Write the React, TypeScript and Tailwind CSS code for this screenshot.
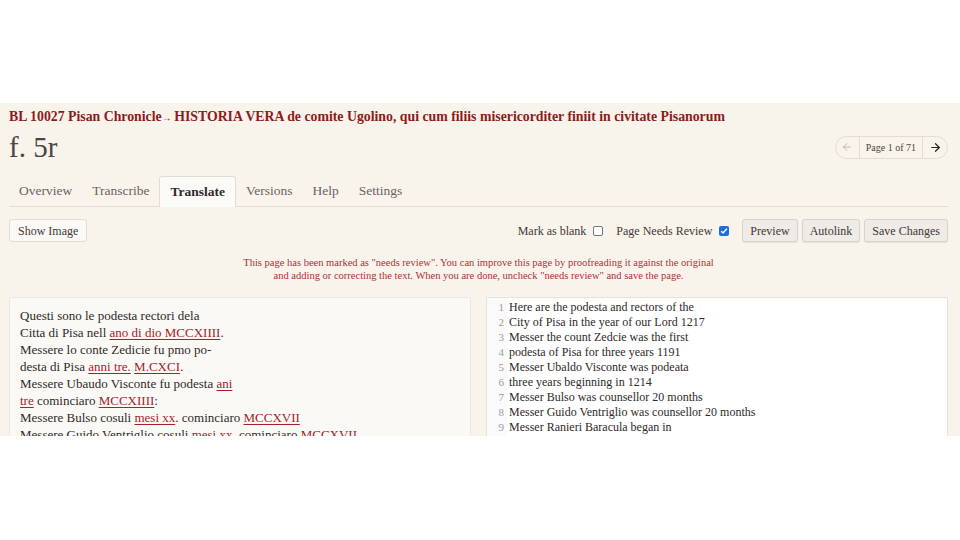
import { ArrowLeft, ArrowRight } from "lucide-react";

const serif = "font-['Liberation_Serif','DejaVu_Serif',serif]";

function L({ children }: { children: React.ReactNode }) {
  return <span className="text-[#a3232b] underline underline-offset-2 decoration-1">{children}</span>;
}

const translation = [
  "Here are the podesta and rectors of the",
  "City of Pisa in the year of our Lord 1217",
  "Messer the count Zedcie was the first",
  "podesta of Pisa for three years 1191",
  "Messer Ubaldo Visconte was podeata",
  "three years beginning in 1214",
  "Messer Bulso was counsellor 20 months",
  "Messer Guido Ventriglio was counsellor 20 months",
  "Messer Ranieri Baracula began in",
  "1217",
];

const tabs = ["Overview", "Transcribe", "Translate", "Versions", "Help", "Settings"];

const btn =
  "h-[23px] px-[7px] border border-[#d8d2ca] rounded-[3px] bg-[#efebe6] shadow-[0_1px_1px_rgba(0,0,0,0.08)] text-[12px]";

function App() {
  return (
    <div className={`w-[960px] h-[540px] bg-white flex flex-col ${serif}`}>
      <div className="h-[103px]" />
      <div className="h-[333px] overflow-hidden bg-[#f8f4ec] pl-[9px] pr-[12px] pt-[5px] text-[#3f3838]">
        {/* Breadcrumb */}
        <div className="text-[13.8px] font-bold text-[#8e1b1b] leading-[18px]">
          BL 10027 Pisan Chronicle<span className="text-[10px] font-normal">→ </span>
          HISTORIA VERA de comite Ugolino, qui cum filiis misericorditer finiit in civitate Pisanorum
        </div>

        {/* Title + pager */}
        <div className="flex items-center justify-between mt-[5px] h-[30px]">
          <h1 className="text-[29px] leading-none text-[#4d4545]">f. 5r</h1>
          <div className="flex items-center h-[23px] rounded-full border border-[#e2dcd3] text-[10px] text-[#4d4545]">
            <span className="w-[24px] flex justify-center text-[#b0a8a0] border-r border-[#e2dcd3] h-full items-center">
              <ArrowLeft size={12} strokeWidth={1.5} />
            </span>
            <span className="px-[6px] border-r border-[#e2dcd3] h-full flex items-center">Page 1 of 71</span>
            <span className="w-[24px] flex justify-center text-[#2a2424] h-full items-center">
              <ArrowRight size={13} strokeWidth={2.2} />
            </span>
          </div>
        </div>

        {/* Tabs */}
        <div className="flex mt-[14px] h-[31px] border-b border-[#e2dcd3]">
          {tabs.map((t) =>
            t === "Translate" ? (
              <div
                key={t}
                className="px-[10px] flex items-center bg-[#fdfbf7] border border-b-0 border-[#e2dcd3] rounded-t-[3px] text-[13.5px] font-bold text-[#2f2929] mb-[-1px] h-[31px]"
              >
                {t}
              </div>
            ) : (
              <div key={t} className="px-[10px] flex items-center text-[13.5px] text-[#6b6262]">
                {t}
              </div>
            )
          )}
        </div>

        {/* Toolbar */}
        <div className="flex items-center justify-between mt-[12px]">
          <button className="h-[23px] px-[8px] border border-[#e2dcd3] rounded-[3px] bg-[#fbf9f5] text-[12px] text-[#3f3838]">
            Show Image
          </button>
          <div className="flex items-center text-[12px] text-[#3f3838]">
            <span>Mark as blank</span>
            <span className="ml-[7px] w-[10px] h-[10px] border border-[#777] rounded-[2px] bg-white" />
            <span className="ml-[13px]">Page Needs Review</span>
            <span className="ml-[7px] w-[10px] h-[10px] rounded-[2px] bg-[#1a6fe0] flex items-center justify-center">
              <svg width="8" height="8" viewBox="0 0 8 8">
                <path d="M1.2 4.2 L3.1 6 L6.8 1.8" stroke="white" strokeWidth="1.5" fill="none" />
              </svg>
            </span>
            <button className={`ml-[13px] ${btn}`}>Preview</button>
            <button className={`ml-[4px] ${btn}`}>Autolink</button>
            <button className={`ml-[4px] ${btn}`}>Save Changes</button>
          </div>
        </div>

        {/* Notice */}
        <div className="mt-[14px] text-center text-[10.5px] leading-[13px] text-[#a8323a]">
          This page has been marked as "needs review". You can improve this page by proofreading it against the original
          <br />
          and adding or correcting the text. When you are done, uncheck "needs review" and save the page.
        </div>

        {/* Panels */}
        <div className="flex gap-[15px] mt-[15px]">
          <div className="w-[462px] h-[160px] bg-[#fbf9f5] border border-[#ede8e0] px-[10px] pt-[9px] text-[13px] leading-[17px] text-[#2f2929]">
            <div>Questi sono le podesta rectori dela</div>
            <div>
              Citta di Pisa nell <L>ano di dio MCCXIIII</L>.
            </div>
            <div>Messere lo conte Zedicie fu pmo po-</div>
            <div>
              desta di Pisa <L>anni tre.</L> <L>M.CXCI</L>.
            </div>
            <div>
              Messere Ubaudo Visconte fu podesta <L>ani</L>
            </div>
            <div>
              <L>tre</L> cominciaro <L>MCCXIIII</L>:
            </div>
            <div>
              Messere Bulso cosuli <L>mesi xx</L>. cominciaro <L>MCCXVII</L>
            </div>
            <div>
              Messere Guido Ventriglio cosuli <L>mesi xx</L>. cominciaro <L>MCCXVII</L>
            </div>
          </div>
          <div className="w-[462px] h-[160px] bg-white border border-[#e6e1d9] flex pt-[2px] text-[12px] leading-[15px] text-[#2f2929]">
            <div className="w-[20px] bg-[#fafafa] text-right pr-[3px] text-[#a09a94] text-[11px]">
              {translation.map((_, i) => (
                <div key={i} className="leading-[15px]">
                  {i + 1}
                </div>
              ))}
            </div>
            <div className="pl-[2px]">
              {translation.map((t, i) => (
                <div key={i}>{t}</div>
              ))}
            </div>
          </div>
        </div>
      </div>
      <div className="flex-1 bg-white" />
    </div>
  );
}

export default App;
